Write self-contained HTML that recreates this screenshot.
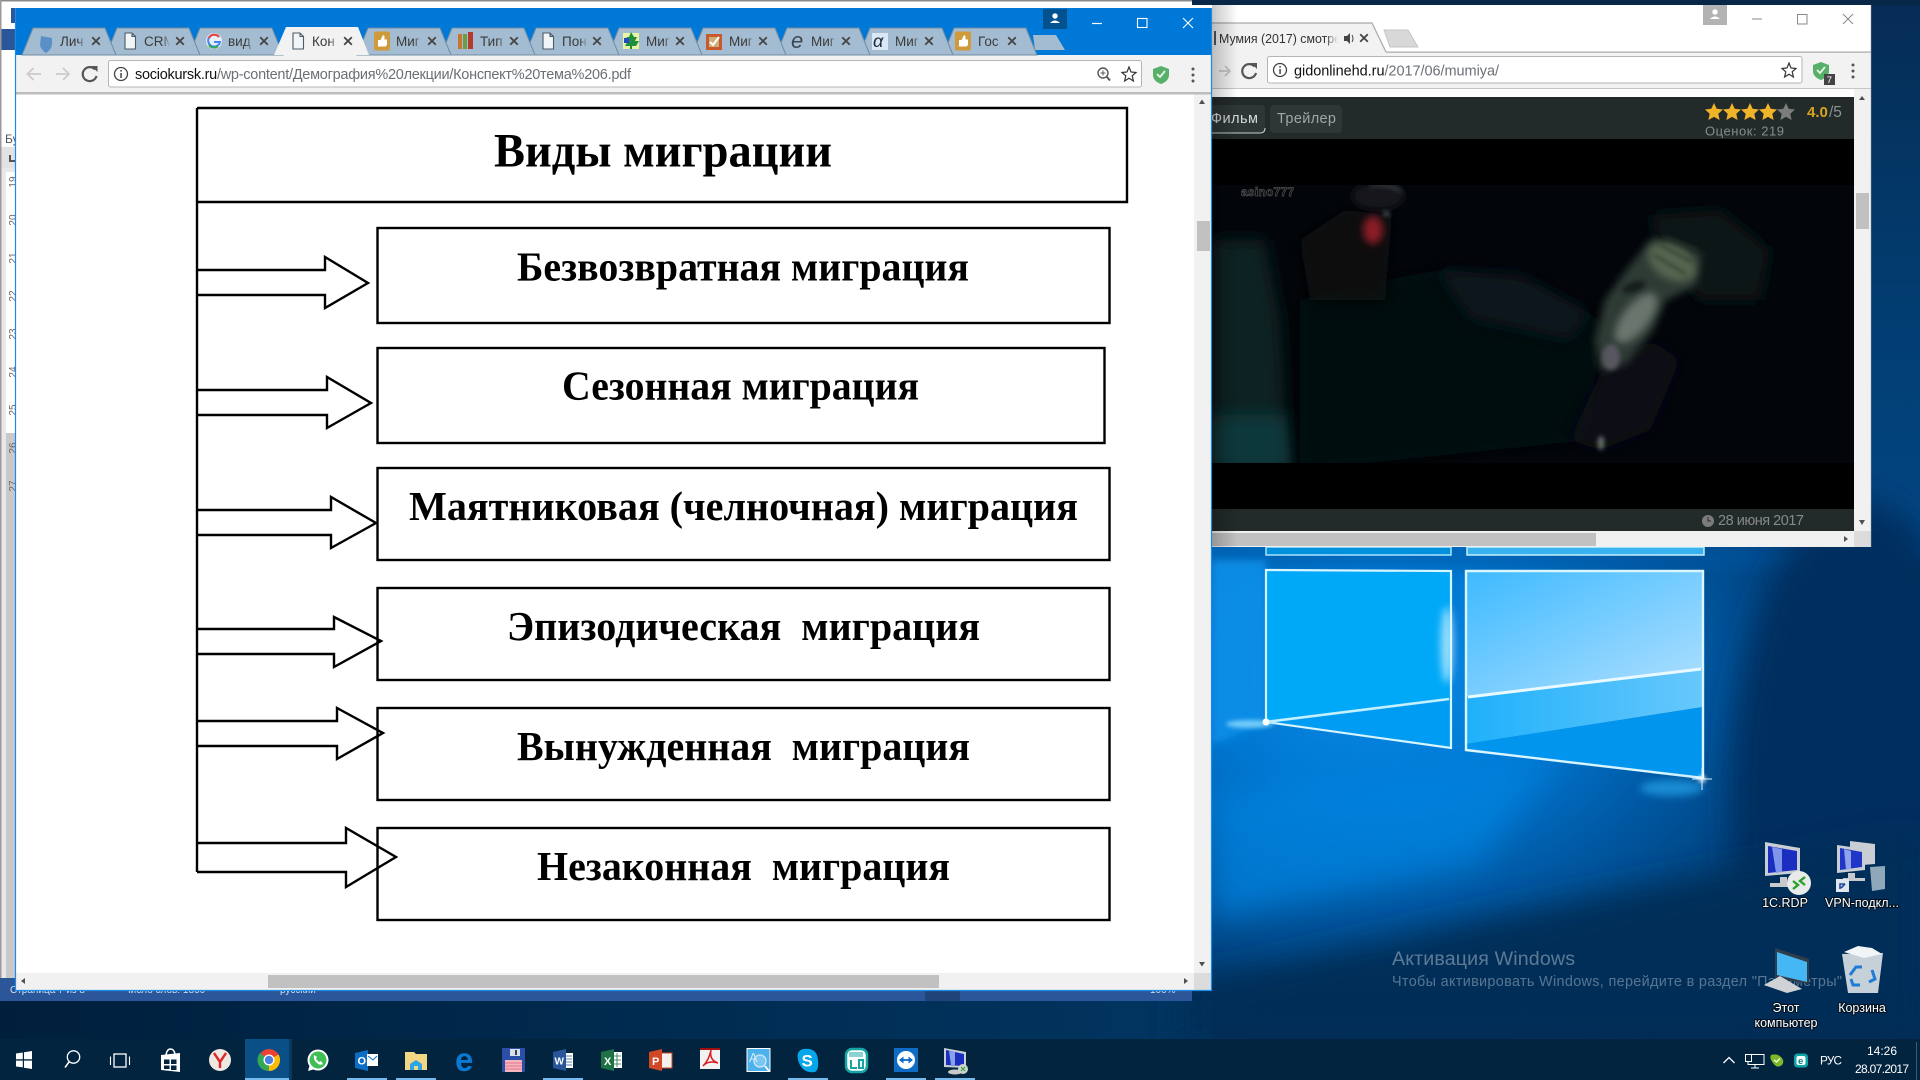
<!DOCTYPE html>
<html lang="ru"><head><meta charset="utf-8"><title>Виды миграции</title>
<style>
html,body{margin:0;padding:0;width:1920px;height:1080px;overflow:hidden;background:#012c57}
svg{display:block;position:absolute;left:0;top:0}
text{font-family:"Liberation Sans",sans-serif}
.pdf{font-family:"Liberation Serif",serif;font-weight:bold;fill:#000}
.tt{font-size:13.5px;fill:#3a3a3a}
.dl{font-size:12.5px;fill:#fff;stroke:rgba(0,0,0,.65);stroke-width:2px;paint-order:stroke;text-anchor:middle}
.rn{font-size:10px;fill:#666;text-anchor:middle}
</style></head><body>
<svg width="1920" height="1080" viewBox="0 0 1920 1080" xmlns="http://www.w3.org/2000/svg">
<defs>
<radialGradient id="glow" gradientUnits="userSpaceOnUse" cx="1380" cy="680" r="560" gradientTransform="translate(1380 680) scale(1 .72) translate(-1380 -680)">
<stop offset="0" stop-color="#0a8ae6"/><stop offset=".3" stop-color="#0078d2"/><stop offset=".55" stop-color="#0059a4"/><stop offset=".8" stop-color="#003f78"/><stop offset="1" stop-color="#012c57"/></radialGradient>
<linearGradient id="paneR" x1="0" y1="0" x2="1" y2="1"><stop offset="0" stop-color="#3dbaff"/><stop offset="1" stop-color="#b2e0ff"/></linearGradient>
<linearGradient id="paneR2" x1="0" y1="0" x2="1" y2="0"><stop offset="0" stop-color="#1fb0fb"/><stop offset="1" stop-color="#67c8fb"/></linearGradient>
<linearGradient id="shL" x1="0" y1="0" x2="1" y2="0"><stop offset="0" stop-color="#000" stop-opacity=".22"/><stop offset="1" stop-color="#000" stop-opacity="0"/></linearGradient>
<linearGradient id="rightS" x1="0" y1="0" x2="0" y2="1"><stop offset="0" stop-color="#062c55"/><stop offset=".5" stop-color="#023c6f"/><stop offset="1" stop-color="#024684"/></linearGradient>
<linearGradient id="bandL" x1="0" y1="0" x2="1" y2="0"><stop offset="0" stop-color="#001f3c"/><stop offset="1" stop-color="#013764"/></linearGradient>
<linearGradient id="bandV" x1="0" y1="0" x2="0" y2="1"><stop offset="0" stop-color="#012c55" stop-opacity="0"/><stop offset="1" stop-color="#012c55" stop-opacity=".8"/></linearGradient>
<linearGradient id="fadeB" x1="0" y1="0" x2="1" y2="0"><stop offset="0" stop-color="#a4bcd1" stop-opacity="0"/><stop offset="1" stop-color="#a4bcd1"/></linearGradient>
<linearGradient id="fadeA" x1="0" y1="0" x2="1" y2="0"><stop offset="0" stop-color="#f2f2f2" stop-opacity="0"/><stop offset="1" stop-color="#f2f2f2"/></linearGradient>
<filter id="b2" x="-60%" y="-60%" width="220%" height="220%"><feGaussianBlur stdDeviation="2"/></filter>
<filter id="b4" x="-60%" y="-60%" width="220%" height="220%"><feGaussianBlur stdDeviation="4"/></filter>
<filter id="b8" x="-60%" y="-60%" width="220%" height="220%"><feGaussianBlur stdDeviation="8"/></filter>
<filter id="b14" x="-30%" y="-60%" width="160%" height="220%"><feGaussianBlur stdDeviation="16"/></filter>
<g id="x"><path d="M-3.8-3.8L3.8 3.8M3.8-3.8L-3.8 3.8" stroke="#444" stroke-width="1.8" fill="none"/></g>
<g id="doc"><path d="M-5-8H2L5.5-4.5V8H-5Z M2-8V-4.5H5.5" fill="#f2f5f7" stroke="#4a5a66" stroke-width="1.1"/></g>
<g id="thumb"><rect x="-8" y="-9.5" width="16" height="19" rx="2" fill="#cf9a3c"/><path d="M-4-1H-1.5L1-6 2.5-5V-1.5H5V4L3.5 5.5H-4Z" fill="#fff"/></g>
<g id="fb"><rect x="18" y="32" width="8" height="18" fill="url(#fadeB)"/><rect x="26" y="32" width="6" height="18" fill="#a4bcd1"/></g>
</defs>

<!-- desktop wallpaper -->
<rect width="1920" height="1080" fill="#012c57"/>
<rect x="0" y="1000" width="1300" height="40" fill="url(#bandL)"/>
<rect x="1212" y="540" width="708" height="500" fill="url(#glow)"/>
<rect x="1871" y="0" width="49" height="560" fill="url(#rightS)"/>
<rect x="1192" y="0" width="728" height="5" fill="#082647"/>
<rect x="1212" y="548" width="708" height="20" fill="#0059a5" opacity=".55" filter="url(#b8)"/>
<ellipse cx="1860" cy="800" rx="130" ry="300" fill="#012f5e" filter="url(#b14)"/>
<path d="M1180 985L1500 915L1920 835V1045H1180Z" fill="#012e58" filter="url(#b14)"/>
<path d="M1212 790L1560 750 1480 860 1212 920Z" fill="#0082de" filter="url(#b14)" opacity=".75"/>
<rect x="1212" y="960" width="708" height="80" fill="url(#bandV)"/>
<path d="M1212 560H1266V722L1212 745Z" fill="#0a8fe8" filter="url(#b4)" opacity=".9"/>
<!-- panes top sliver -->
<path d="M1266 547H1451V555H1266Z" fill="#0090dc" stroke="#a9e2fb" stroke-width="1.5"/>
<path d="M1467 547H1704V555H1467Z" fill="#39b3f0" stroke="#c6eefc" stroke-width="1.5"/>
<!-- left pane -->
<path d="M1266 570L1451 571V748L1266 722Z" fill="#00a9f8"/>
<path d="M1266 722L1449 699V748Z" fill="#009bf2"/>
<ellipse cx="1447" cy="645" rx="6" ry="38" fill="#e0f7ff" filter="url(#b4)" opacity=".7"/>
<path d="M1266 570L1451 571V748L1266 722Z" fill="none" stroke="#d6f5ff" stroke-width="2.2"/>
<path d="M1266 722L1449 699" stroke="#c4f0ff" stroke-width="2.6"/>
<!-- right pane -->
<path d="M1466 571H1703V669L1466 697Z" fill="url(#paneR)"/>
<path d="M1466 697L1703 669V707L1466 744Z" fill="url(#paneR2)"/>
<path d="M1466 744L1703 707V778L1466 750Z" fill="#0295ee"/>
<path d="M1466 571H1703V778L1466 750Z" fill="none" stroke="#d9f6ff" stroke-width="2.4"/>
<path d="M1468 697L1701 669" stroke="#e8faff" stroke-width="3"/>
<ellipse cx="1250" cy="724" rx="24" ry="4" fill="#8edcff" filter="url(#b2)" opacity=".8"/>
<circle cx="1266" cy="722" r="3.5" fill="#fff"/>
<ellipse cx="1672" cy="788" rx="32" ry="8" fill="#2cb0f8" filter="url(#b4)" opacity=".6"/>
<circle cx="1702" cy="779" r="3.5" fill="#fff" filter="url(#b2)"/>
<path d="M1702 768V790M1692 779H1712" stroke="#d8f4ff" stroke-width="1"/>

<!-- activation -->
<text x="1392" y="965" font-size="19.6" fill="#fff" fill-opacity=".36" textLength="183">Активация Windows</text>
<text x="1392" y="986" font-size="14.4" fill="#fff" fill-opacity=".34" textLength="450">Чтобы активировать Windows, перейдите в раздел "Параметры"</text>

<!-- desktop icons -->
<g>
<path d="M1765 842L1800 848V873L1765 876Z" fill="#c9ced4"/><path d="M1768 846L1797 851V870L1768 873Z" fill="#1a2fc0"/><path d="M1772 847L1782 849V872L1776 873Z" fill="#7f95ea"/>
<path d="M1780 877H1787V883H1798V887H1770V883H1780Z" fill="#c7c9cc"/>
<circle cx="1799" cy="883" r="12" fill="#e9ebe9"/><path d="M1793 881L1798 885 1793 889M1805 877L1800 881 1805 885" stroke="#2aa02a" stroke-width="2.4" fill="none"/>
<text x="1785" y="907" class="dl">1С.RDP</text>
<path d="M1850 841L1875 844V864L1850 866Z" fill="#c9ced4"/><path d="M1837 845L1865 849V870L1837 873Z" fill="#c9ced4"/><path d="M1840 848L1862 852V867L1840 870Z" fill="#2036c6"/><path d="M1844 849L1851 851V869L1846 870Z" fill="#8fa3ea"/>
<path d="M1848 873H1855V878H1865V881H1843V878H1848Z" fill="#c7c9cc"/><path d="M1870 867L1885 866V889L1872 891Z" fill="#8ea7bb"/>
<rect x="1836" y="879" width="13" height="13" fill="#dfe6ee"/><path d="M1840 889V884H1845M1845 884L1841 888" stroke="#1c4a9c" stroke-width="1.6" fill="none"/>
<text x="1862" y="907" class="dl">VPN-подкл...</text>
<path d="M1775 948L1809 959V984L1775 978Z" fill="#2f3e4a"/><path d="M1777 952L1807 962V982L1777 975Z" fill="#44b7f4"/>
<path d="M1764 985L1780 976 1802 989 1787 993Z" fill="#cfd3d6"/>
<text x="1786" y="1012" class="dl">Этот</text><text x="1786" y="1027" class="dl">компьютер</text>
<path d="M1842 954L1883 953 1878 993 1848 993Z" fill="#c6d0d9"/><path d="M1844 952L1858 946 1872 948 1882 954 1864 958Z" fill="#f2f5f7"/>
<path d="M1850 975L1856 967H1862M1872 970L1875 979 1869 982M1860 985H1853L1851 979" stroke="#1d7cd6" stroke-width="3" fill="none"/>
<text x="1862" y="1012" class="dl">Корзина</text>
</g>

<!-- Word window behind -->
<rect x="0" y="0" width="1192" height="1001" fill="#fff"/>
<rect x="0" y="0" width="1192" height="1.5" fill="#8a8a8a"/>
<rect x="0" y="0" width="1.5" height="1001" fill="#9a9a9a"/>
<rect x="11" y="8" width="5" height="15" fill="#2b579a"/>
<rect x="1.5" y="29" width="14" height="21" fill="#2b579a"/>
<rect x="1.5" y="147" width="14" height="21" fill="#e2e2e2"/>
<path d="M10 155V161H15" stroke="#555" stroke-width="2" fill="none"/>
<text x="5" y="143" font-size="12" fill="#555">Бу</text>
<rect x="1.5" y="168" width="14" height="810" fill="#e8e8e8"/>
<rect x="6" y="172" width="9.5" height="261" fill="#fff"/>
<rect x="6" y="433" width="9.5" height="545" fill="#c9c9c9"/>
<g class="rn">
<text transform="translate(16 182) rotate(-90)" class="rn">19</text><text transform="translate(16 220) rotate(-90)" class="rn">20</text><text transform="translate(16 258) rotate(-90)" class="rn">21</text><text transform="translate(16 296) rotate(-90)" class="rn">22</text><text transform="translate(16 334) rotate(-90)" class="rn">23</text><text transform="translate(16 372) rotate(-90)" class="rn">24</text><text transform="translate(16 410) rotate(-90)" class="rn">25</text><text transform="translate(16 448) rotate(-90)" class="rn">26</text><text transform="translate(16 486) rotate(-90)" class="rn">27</text>
</g>
<rect x="0" y="978" width="1192" height="23" fill="#2b579a"/>
<rect x="925" y="990" width="35" height="11" fill="#1e4479"/>
<text x="10" y="993" font-size="10" fill="#d6e2f2">Страница 7 из 8</text>
<text x="124" y="993" font-size="10" fill="#d6e2f2">Число слов: 1860</text>
<text x="280" y="993" font-size="10" fill="#d6e2f2">русский</text>
<text x="1150" y="993" font-size="10" fill="#d6e2f2">100%</text>

<!-- second Chrome window -->
<rect x="1192" y="5" width="679" height="542" fill="#fff"/>
<rect x="1192" y="52" width="679" height="36" fill="#f2f2f2"/>
<rect x="1192" y="51.5" width="180" height="1" fill="#f2f2f2"/>
<rect x="1386" y="51.5" width="485" height="1.2" fill="#a9a9a9"/>
<path d="M1192 23H1372L1386 52H1192Z" fill="#f2f2f2"/>
<path d="M1212 23H1372L1386 52" fill="none" stroke="#a9a9a9" stroke-width="1.2"/>
<text x="1219" y="43" font-size="13" fill="#333" textLength="122" lengthAdjust="spacingAndGlyphs">Мумия (2017) смотре</text>
<rect x="1326" y="30" width="12" height="18" fill="url(#fadeA)"/><rect x="1338" y="30" width="4" height="18" fill="#f2f2f2"/>
<path d="M1344 36H1347L1350 33V44L1347 41H1344Z" fill="#444"/><path d="M1352 35Q1354 38.500 1352 42" stroke="#444" fill="none"/>
<use href="#x" x="1364" y="38"/>
<rect x="1214" y="31" width="2" height="14" fill="#555"/>
<path d="M1384 30H1408L1418 47H1390Z" fill="#d8d8d8" stroke="#c5c5c5"/>
<rect x="1703" y="5" width="24" height="20" fill="#b3b3b3"/>
<circle cx="1715" cy="12" r="2.700" fill="#fff"/><path d="M1710 19Q1715 14 1720 19Z" fill="#fff"/>
<path d="M1752 19H1762" stroke="#8a8a8a" stroke-width="1"/>
<rect x="1797.500" y="14.500" width="9.500" height="9.500" fill="none" stroke="#8a8a8a"/>
<path d="M1843 14L1853 24M1853 14L1843 24" stroke="#8a8a8a" fill="none"/>
<!-- toolbar -->
<path d="M1219 71H1229M1225 66L1230 71 1225 76" stroke="#c4c4c4" stroke-width="1.8" fill="none"/>
<path d="M1254.500 66.500A7 7 0 1 0 1256 73" stroke="#555" stroke-width="2.200" fill="none"/><path d="M1251 63L1257 63 1257 69Z" fill="#555"/>
<rect x="1267.500" y="56.500" width="534.500" height="26.500" rx="2" fill="#fff" stroke="#b5b5b5"/>
<circle cx="1280" cy="70" r="6.500" fill="none" stroke="#444" stroke-width="1.300"/><rect x="1279.300" y="69" width="1.500" height="5" fill="#444"/><rect x="1279.300" y="66" width="1.500" height="1.600" fill="#444"/>
<text x="1294" y="75.500" font-size="14.500" fill="#6b7076" textLength="205"><tspan fill="#111">gidonlinehd.ru</tspan>/2017/06/mumiya/</text>
<path d="M1789 63L1791 68 1796 68.500 1792.200 71.800 1793.400 77 1789 74.200 1784.600 77 1785.800 71.800 1782 68.500 1787 68Z" fill="#fff" stroke="#333" stroke-width="1.200"/>
<path d="M1821 62L1829 65V71Q1829 77 1821 80 1813 77 1813 71V65Z" fill="#57b06a"/><path d="M1817 70L1820 73 1825 67" stroke="#e8f5e8" stroke-width="1.800" fill="none"/>
<rect x="1824" y="74" width="11" height="11" fill="#444"/><text x="1826.700" y="83" font-size="9.500" fill="#fff">7</text>
<circle cx="1853" cy="65" r="1.500" fill="#555"/><circle cx="1853" cy="71" r="1.500" fill="#555"/><circle cx="1853" cy="77" r="1.500" fill="#555"/>
<rect x="1192" y="88" width="679" height="1" fill="#c5c5c5"/>
<!-- page content -->
<rect x="1212" y="97" width="642" height="434" fill="#000"/>
<!-- video -->
<rect x="1212" y="185" width="642" height="278" fill="#02060a"/>
<g>
<path d="M1212 240H1265L1280 320L1288 470H1212Z" fill="#072124" filter="url(#b8)"/>
<path d="M1212 415H1286L1292 470H1212Z" fill="#0e383b" filter="url(#b8)"/>
<path d="M1300 300L1385 280 1450 268 1540 285 1600 320 1590 440 1300 470Z" fill="#04090e" filter="url(#b8)"/>
<path d="M1436 270L1520 275 1590 312 1570 340 1470 318Z" fill="#08151b" filter="url(#b8)"/>
<path d="M1300 240L1345 210 1392 215 1385 300 1310 300Z" fill="#090b0e" filter="url(#b8)"/>
<ellipse cx="1378" cy="196" rx="26" ry="14" fill="#15181a" filter="url(#b4)"/>
<path d="M1368 188Q1385 183 1404 194 L1400 188Q1385 180 1370 186Z" fill="#4c5a5a" filter="url(#b2)" opacity=".6"/>
<ellipse cx="1373" cy="230" rx="10" ry="14" fill="#8a1c28" filter="url(#b4)"/>
<path d="M1382 212L1388 211 1391 215 1385 216Z" fill="#7a8e8e" filter="url(#b2)" opacity=".6"/>
<!-- head -->
<path d="M1650 215L1720 210 1770 250 1760 300 1700 300 1660 250Z" fill="#0c1616" filter="url(#b8)"/>
<path d="M1570 440L1600 375 1650 340 1680 360 1650 430 1600 450Z" fill="#0e1112" filter="url(#b8)"/>
<path d="M1652 238L1702 254 1696 286 1666 300 1652 332 1626 364 1600 372 1595 340 1605 300 1628 268Z" fill="#2e3a34" filter="url(#b4)"/>
<ellipse cx="1672" cy="262" rx="26" ry="17" transform="rotate(30 1672 262)" fill="#55664f" filter="url(#b4)"/>
<path d="M1660 245L1692 262M1654 255L1686 274M1664 236L1698 250" stroke="#2a352c" stroke-width="2" filter="url(#b2)" fill="none"/>
<ellipse cx="1636" cy="318" rx="30" ry="13" transform="rotate(-52 1636 318)" fill="#6a756d" filter="url(#b4)"/>
<ellipse cx="1634" cy="287" rx="12" ry="5" transform="rotate(-20 1634 287)" fill="#141a1a" filter="url(#b2)"/>
<ellipse cx="1611" cy="357" rx="9" ry="13" fill="#56565f" filter="url(#b2)"/>
<ellipse cx="1601" cy="443" rx="3.500" ry="7" fill="#5f6a64" filter="url(#b2)"/>
<text x="1241" y="196" font-size="12" font-weight="bold" fill="#000" stroke="#555" stroke-width=".7" textLength="53">asino777</text>
</g>
<rect x="1212" y="463" width="642" height="46" fill="#000"/>
<rect x="1212" y="139" width="642" height="46" fill="#000"/>
<rect x="1212" y="97" width="642" height="42" fill="#232a2a"/>
<rect x="1190" y="105" width="75" height="28" rx="4" fill="#2f3636"/><path d="M1212 133H1260Q1265 133 1265 128" stroke="#c9cfcf" fill="none"/>
<text x="1211" y="123" font-size="14.500" fill="#d5d9d9" textLength="47">Фильм</text>
<rect x="1270" y="105" width="72" height="28" rx="4" fill="#2f3636"/>
<text x="1277" y="123" font-size="14.500" fill="#9ea6a6" textLength="59">Трейлер</text>
<g fill="#f0b429">
<path id="s" d="M1714 103L1716.700 108.800 1723 109.500 1718.300 113.800 1719.600 120 1714 116.900 1708.400 120 1709.700 113.800 1705 109.500 1711.300 108.800Z"/>
<use href="#s" x="18"/><use href="#s" x="36"/><use href="#s" x="54"/>
</g>
<path d="M1786 103L1788.700 108.800 1795 109.500 1790.300 113.800 1791.600 120 1786 116.900 1780.400 120 1781.700 113.800 1777 109.500 1783.300 108.800Z" fill="#7c7c7c"/>
<text x="1807" y="117" font-size="15" font-weight="bold" fill="#d9a520">4.0</text><text x="1829" y="117" font-size="15.500" fill="#8b9292">/5</text>
<text x="1705" y="135.500" font-size="13" fill="#848c8c" textLength="79">Оценок: 219</text>
<rect x="1212" y="509" width="642" height="22" fill="#232a2a"/>
<circle cx="1708" cy="521" r="6" fill="#7c7c7c"/><path d="M1708 517V521H1711" stroke="#2a2a2a" stroke-width="1" fill="none"/>
<text x="1718" y="525" font-size="14.500" fill="#888" textLength="86">28 июня 2017</text>
<!-- scrollbars -->
<rect x="1854" y="89" width="17" height="458" fill="#f1f1f1"/>
<rect x="1856" y="193" width="13" height="36" fill="#c1c1c1"/>
<path d="M1859 100H1865L1862 96Z" fill="#505050"/><path d="M1859 520H1865L1862 525Z" fill="#505050"/>
<rect x="1212" y="531" width="642" height="16" fill="#f1f1f1"/>
<rect x="1212" y="533" width="384" height="13" fill="#c1c1c1"/>
<path d="M1844 536V542L1848 539Z" fill="#505050"/>
<rect x="1854" y="531" width="17" height="16" fill="#dcdcdc"/>
<rect x="1212" y="5" width="26" height="542" fill="url(#shL)"/>
<rect x="1870.500" y="5" width="1" height="542" fill="#9aa0a6" opacity=".5"/>

<!-- main Chrome window -->
<rect x="15" y="8" width="1197" height="983" fill="#0078d7"/>
<rect x="16" y="55" width="1195" height="935" fill="#f2f2f2"/>
<rect x="16" y="92" width="1195" height="2.500" fill="#bdbdbd"/>
<rect x="16" y="94.500" width="1178" height="879" fill="#fff"/>
<g id="tabs">
<path d="M1035 50L1033 35H1056L1065 50Z" fill="#a4bcd1"/>
<path d="M943 55L954 28H1026L1037 55Z" fill="#a4bcd1" stroke="#6e8ca5"/>
<path d="M859 55L870 28H942L953 55Z" fill="#a4bcd1" stroke="#6e8ca5"/>
<path d="M776 55L787 28H859L870 55Z" fill="#a4bcd1" stroke="#6e8ca5"/>
<path d="M692 55L703 28H775L786 55Z" fill="#a4bcd1" stroke="#6e8ca5"/>
<path d="M608 55L619 28H691L702 55Z" fill="#a4bcd1" stroke="#6e8ca5"/>
<path d="M525 55L536 28H608L619 55Z" fill="#a4bcd1" stroke="#6e8ca5"/>
<path d="M441 55L452 28H524L535 55Z" fill="#a4bcd1" stroke="#6e8ca5"/>
<path d="M357 55L368 28H440L451 55Z" fill="#a4bcd1" stroke="#6e8ca5"/>
<path d="M189 55L200 28H272L283 55Z" fill="#a4bcd1" stroke="#6e8ca5"/>
<path d="M106 55L117 28H189L200 55Z" fill="#a4bcd1" stroke="#6e8ca5"/>
<path d="M22 55L33 28H105L116 55Z" fill="#a4bcd1" stroke="#6e8ca5"/>
<path d="M274 55L286 27H358L369 55Z" fill="#f2f2f2"/>
</g>
<!-- tab content -->
<path d="M41 36L52 38V45Q51 50 46 53 41 50 40 45Z" fill="#5a8fc7"/>
<text x="60" y="46" class="tt">Лич</text><use href="#fb" x="60"/><use href="#x" x="96" y="41"/>
<use href="#doc" x="130" y="41"/><text x="144" y="46" class="tt">CRM</text><use href="#fb" x="144"/><use href="#x" x="180" y="41"/>
<circle cx="214" cy="41" r="8" fill="#e8eef3"/><path d="M219 37A6 6 0 1 0 220 42H214" fill="none" stroke="#4285f4" stroke-width="2"/><path d="M219 37A6 6 0 0 0 209 38" fill="none" stroke="#ea4335" stroke-width="2"/><path d="M209 45A6 6 0 0 0 218 46" fill="none" stroke="#34a853" stroke-width="2"/>
<text x="228" y="46" class="tt">вид</text><use href="#fb" x="228"/><use href="#x" x="264" y="41"/>
<use href="#doc" x="298" y="41"/><text x="312" y="46" class="tt" fill="#222">Кон</text><rect x="330" y="32" width="8" height="18" fill="url(#fadeA)"/><rect x="338" y="32" width="6" height="18" fill="#f2f2f2"/><use href="#x" x="348" y="41"/>
<use href="#thumb" x="382" y="41"/><text x="396" y="46" class="tt">Миг</text><use href="#fb" x="396"/><use href="#x" x="432" y="41"/>
<rect x="458" y="34" width="4" height="15" fill="#c7762f"/><rect x="463" y="34" width="4" height="15" fill="#6e9e44"/><rect x="468" y="32" width="5" height="17" fill="#b33a2c"/>
<text x="480" y="46" class="tt">Тип</text><use href="#fb" x="480"/><use href="#x" x="514" y="41"/>
<use href="#doc" x="548" y="41"/><text x="562" y="46" class="tt">Пон</text><use href="#fb" x="562"/><use href="#x" x="597" y="41"/>
<rect x="623" y="33" width="16" height="16" fill="#e8f4a0"/><path d="M631 32L634 37H637L635 41H639L636 46H632V49H630V46H625L628 41H624L627 37H629Z" fill="#1f8f3e"/><rect x="624" y="38" width="5" height="5" fill="#2448c0"/>
<text x="646" y="46" class="tt">Миг</text><use href="#fb" x="646"/><use href="#x" x="680" y="41"/>
<rect x="706" y="34" width="16" height="16" fill="#c85a2c"/><rect x="709" y="37" width="10" height="10" fill="#cbb07a"/><path d="M710 42L713 45 719 37" stroke="#fff" stroke-width="2" fill="none"/>
<text x="729" y="46" class="tt">Миг</text><use href="#fb" x="729"/><use href="#x" x="763" y="41"/>
<text x="791" y="48" font-size="22" font-family="Liberation Serif" font-style="italic" fill="#3a4a55">e</text>
<text x="811" y="46" class="tt">Миг</text><use href="#fb" x="811"/><use href="#x" x="846" y="41"/>
<rect x="872" y="33" width="16" height="17" fill="#d8e8f4"/><text x="873" y="47" font-size="18" font-family="Liberation Serif" font-style="italic" fill="#1a2a3a">α</text>
<text x="895" y="46" class="tt">Миг</text><use href="#fb" x="895"/><use href="#x" x="929" y="41"/>
<use href="#thumb" x="963" y="41"/><text x="978" y="46" class="tt">Гос</text><use href="#fb" x="978"/><use href="#x" x="1012" y="41"/>
<!-- window controls -->
<rect x="1043" y="9" width="24" height="20" fill="#02528f"/>
<circle cx="1055" cy="16" r="2.700" fill="#fff"/><path d="M1050 23Q1055 18 1060 23Z" fill="#fff"/>
<path d="M1092 23.500H1102" stroke="#fff" stroke-width="1.200"/>
<rect x="1137.500" y="18.500" width="9.500" height="9" fill="none" stroke="#fff" stroke-width="1.100"/>
<path d="M1183 18L1193 28M1193 18L1183 28" stroke="#fff" stroke-width="1.100" fill="none"/>
<!-- toolbar -->
<path d="M28 74H41M33.500 68L27.500 74 33.500 80" stroke="#cbcbcb" stroke-width="1.800" fill="none"/>
<path d="M56 74H69M63 68L69 74 63 80" stroke="#cbcbcb" stroke-width="1.800" fill="none"/>
<path d="M95 69.500A7 7 0 1 0 96.500 76" stroke="#555" stroke-width="2.200" fill="none"/><path d="M91.500 66L97.500 66 97.500 72Z" fill="#555"/>
<rect x="108.500" y="60.500" width="1033" height="26.500" rx="2" fill="#fff" stroke="#b5b5b5"/>
<circle cx="121" cy="74" r="6.500" fill="none" stroke="#444" stroke-width="1.300"/><rect x="120.300" y="73" width="1.500" height="5" fill="#444"/><rect x="120.300" y="70" width="1.500" height="1.600" fill="#444"/>
<text x="135" y="79" font-size="14.500" fill="#6b7076" textLength="496"><tspan fill="#111">sociokursk.ru</tspan>/wp-content/Демография%20лекции/Конспект%20тема%206.pdf</text>
<circle cx="1103" cy="73" r="5" fill="none" stroke="#555" stroke-width="1.400"/><path d="M1107 77L1110 80.500" stroke="#555" stroke-width="2"/><path d="M1100.500 73H1105.500M1103 70.500V75.500" stroke="#555"/>
<path d="M1129 67L1131 72 1136 72.500 1132.200 75.800 1133.400 81 1129 78.200 1124.600 81 1125.800 75.800 1122 72.500 1127 72Z" fill="#fff" stroke="#333" stroke-width="1.200"/>
<path d="M1161 66L1169 69V75Q1169 81 1161 84 1153 81 1153 75V69Z" fill="#57b06a"/><path d="M1157 74L1160 77 1165 71" stroke="#e8f5e8" stroke-width="1.800" fill="none"/>
<circle cx="1193" cy="69" r="1.500" fill="#555"/><circle cx="1193" cy="75" r="1.500" fill="#555"/><circle cx="1193" cy="81" r="1.500" fill="#555"/>

<!-- PDF diagram -->
<g fill="none" stroke="#000" stroke-width="2.400">
<path d="M197 108H1127V202H197"/><path d="M197 108V872"/>
<rect x="377.500" y="228" width="732" height="95"/>
<rect x="377.500" y="348" width="727" height="95"/>
<rect x="377.500" y="468" width="732" height="92"/>
<rect x="377.500" y="588" width="732" height="92"/>
<rect x="377.500" y="708" width="732" height="92"/>
<rect x="377.500" y="828" width="732" height="92"/>
<path d="M197 270H325V257L368 283 325 308V295H197"/>
<path d="M197 390H327V377L371 403 327 428V415H197"/>
<path d="M197 510H331V497L376 523 331 548V535H197"/>
<path d="M197 629H334V617L381 641 334 667V654H197"/>
<path d="M197 721H337V708L383 733 337 759V746H197"/>
<path d="M197 843H346V828L396 857 346 887V872H197"/>
</g>
<text class="pdf" x="494" y="166.500" font-size="48" textLength="338" lengthAdjust="spacingAndGlyphs">Виды миграции</text>
<text class="pdf" x="517" y="280.500" font-size="41" textLength="452" lengthAdjust="spacingAndGlyphs">Безвозвратная миграция</text>
<text class="pdf" x="562" y="399.500" font-size="41" textLength="357" lengthAdjust="spacingAndGlyphs">Сезонная миграция</text>
<text class="pdf" x="409" y="520" font-size="41" textLength="669" lengthAdjust="spacingAndGlyphs">Маятниковая (челночная) миграция</text>
<text class="pdf" x="507" y="640" font-size="41" textLength="473" lengthAdjust="spacingAndGlyphs" xml:space="preserve">Эпизодическая  миграция</text>
<text class="pdf" x="517" y="760" font-size="41" textLength="453" lengthAdjust="spacingAndGlyphs" xml:space="preserve">Вынужденная  миграция</text>
<text class="pdf" x="537" y="880" font-size="41" textLength="413" lengthAdjust="spacingAndGlyphs" xml:space="preserve">Незаконная  миграция</text>

<!-- main scrollbars -->
<rect x="1194" y="94.500" width="17" height="879" fill="#f1f1f1"/>
<rect x="1197" y="221" width="13" height="30" fill="#c1c1c1"/>
<path d="M1199 104H1205L1202 99.500Z" fill="#505050"/><path d="M1199 962H1205L1202 966.500Z" fill="#505050"/>
<rect x="16" y="973" width="1178" height="17" fill="#f1f1f1"/>
<rect x="268" y="975" width="671" height="13" fill="#c1c1c1"/>
<path d="M25 978V984L21 981Z" fill="#505050"/><path d="M1184 978V984L1188 981Z" fill="#505050"/>
<rect x="1194" y="973" width="17" height="17" fill="#dcdcdc"/>
<path d="M15.500 8V990.500H1211.500V8" fill="none" stroke="#1b8be4" stroke-width="1.200"/>

<!-- taskbar -->
<rect x="0" y="1039" width="1920" height="41" fill="#02243f"/>
<rect x="245" y="1039" width="44" height="41" fill="#0a4f85"/>
<g fill="#76b9ed">
<rect x="245" y="1078" width="44" height="2"/><rect x="347" y="1078" width="40" height="2"/><rect x="396" y="1078" width="40" height="2"/><rect x="543" y="1078" width="40" height="2"/><rect x="788" y="1078" width="40" height="2"/><rect x="886" y="1078" width="40" height="2"/><rect x="935" y="1078" width="40" height="2"/>
</g>
<rect x="289" y="1039" width="3" height="41" fill="#0b3a60"/>
<path d="M16 1053.500L22.800 1052.500V1059.300H16ZM24 1052.300L32 1051V1059.300H24ZM16 1060.600H22.800V1067.400L16 1066.500ZM24 1060.600H32V1069L24 1067.700Z" fill="#fff"/>
<circle cx="73.500" cy="1057" r="6.200" fill="none" stroke="#fff" stroke-width="1.300"/><path d="M69 1062L65 1067.500" stroke="#fff" stroke-width="1.500"/>
<rect x="114" y="1054" width="12" height="13" fill="none" stroke="#fff" stroke-width="1.300"/><path d="M110.500 1056.500V1065M129.500 1056.500V1065" stroke="#fff" stroke-width="1.100"/>
<path d="M161 1055L180 1053V1072L161 1070Z" fill="#fff"/><path d="M166 1055Q167 1049 170.500 1049 174 1049 175 1054" fill="none" stroke="#fff" stroke-width="1.500"/><path d="M164 1059.500H169.500V1064H164ZM171 1059.500H176.500V1064H171ZM164 1065.500H169.500V1069H164ZM171 1065.500H176.500V1070H171Z" fill="#02243f"/>
<circle cx="220" cy="1060" r="11" fill="#eee7e2"/><path d="M214 1053L220 1062V1068M226 1053L220 1062" stroke="#e02222" stroke-width="2.400" fill="none"/>
<circle cx="269" cy="1060" r="11" fill="#ea4335"/><path d="M269 1060L260 1053A11 11 0 0 0 269 1071Z" fill="#34a853"/><path d="M269 1060V1071A11 11 0 0 0 278.500 1054.500Z" fill="#fbbc05"/><circle cx="269" cy="1060" r="5.500" fill="#fff"/><circle cx="269" cy="1060" r="4.200" fill="#4c80e0"/>
<circle cx="318" cy="1060" r="10.500" fill="#fff"/><circle cx="318" cy="1060" r="8.500" fill="#3fbe55"/><path d="M308 1071L310 1064 315 1069Z" fill="#fff"/><path d="M314 1055Q313 1060 317 1063 320 1066 323 1064L321 1061 319 1062 316 1059 317 1057Z" fill="#fff"/>
<path d="M355 1053L368 1050V1071L355 1068Z" fill="#0a6fc4"/><rect x="367" y="1054" width="11" height="12" fill="#fff"/><path d="M368 1056L373 1060 377 1056" stroke="#0a6fc4" fill="none"/><text x="357.500" y="1064.500" font-size="11" font-weight="bold" fill="#fff">O</text>
<path d="M405 1052H414L416 1054H427V1070H405Z" fill="#f3d684"/><path d="M410 1070V1064L416 1060 422 1064V1070H418V1066H414V1070Z" fill="#2ca6e8"/>
<text x="455" y="1071" font-size="33" font-weight="bold" fill="#0b78d4" font-family="Liberation Sans">e</text>
<rect x="502" y="1048" width="23" height="24" rx="1" fill="#2b4fa8"/><rect x="505" y="1060" width="17" height="12" fill="#f3b6bf"/><rect x="510" y="1049" width="10" height="7" fill="#d9dfe8"/><rect x="515" y="1050" width="2" height="5" fill="#345"/><path d="M505 1063H522M505 1066H522M505 1069H522" stroke="#e55b6e" stroke-width=".8"/>
<rect x="562" y="1053" width="11" height="15" fill="#fff"/><path d="M553 1052L566 1049V1071L553 1068Z" fill="#2a5699"/><text x="554.500" y="1064.500" font-size="10" font-weight="bold" fill="#fff">W</text><path d="M566 1056H572M566 1059H572M566 1062H572M566 1065H572" stroke="#2a5699" stroke-width=".8"/>
<rect x="611" y="1052" width="11" height="16" fill="#fff"/><path d="M601 1052L614 1049V1071L601 1068Z" fill="#1f7244"/><text x="604" y="1065" font-size="11" font-weight="bold" fill="#fff">X</text><path d="M614 1056H621M614 1060H621M614 1064H621M617 1053V1067" stroke="#1f7244" stroke-width=".8"/>
<rect x="660" y="1053" width="12" height="15" fill="#f3f0ee" stroke="#d24726"/><path d="M649 1052L662 1049V1071L649 1068Z" fill="#d24726"/><text x="652" y="1065" font-size="11" font-weight="bold" fill="#fff">P</text>
<path d="M700 1049H720V1069L700 1069Z" fill="#f2f2f2"/><rect x="700" y="1048" width="20" height="2" fill="#a01010"/><path d="M703 1066Q709 1060 711 1050 709 1060 718 1063 708 1060 703 1066Z" fill="none" stroke="#d81e1e" stroke-width="1.500"/>
<rect x="747" y="1048.500" width="23" height="23" fill="#4db2ec" stroke="#fff"/><circle cx="760" cy="1061" r="6" fill="#79c6f2" stroke="#cfe9f8" stroke-width="1.300"/><path d="M765 1066L769 1071" stroke="#fff" stroke-width="1.800"/><text x="749" y="1062" font-size="13" fill="#cfe9f8">A</text>
<path d="M803 1049Q817 1047 818 1060 819 1070 815 1072 802 1074 798 1060 796 1051 803 1049Z" fill="#05a6ea"/><text x="801.500" y="1066.500" font-size="17" font-weight="bold" fill="#fff">S</text>
<rect x="846" y="1049" width="21" height="23" rx="6" fill="#fff" stroke="#14a5a5" stroke-width="2.500"/><rect x="849" y="1052" width="14" height="5" fill="#8bd3d3"/><path d="M851 1060V1068H857M859 1060H863V1068H859Z" stroke="#14a5a5" stroke-width="2" fill="none"/>
<rect x="894" y="1048" width="24" height="24" fill="#0e6cc4"/><circle cx="906" cy="1060" r="9" fill="#fff"/><path d="M900 1060H912" stroke="#0e6cc4" stroke-width="1.800"/><path d="M903.500 1056.500L899 1060 903.500 1063.500ZM908.500 1056.500L913 1060 908.500 1063.500Z" fill="#0e6cc4"/>
<path d="M944 1048L966 1052V1068L944 1067Z" fill="#c8d0d8"/><path d="M946 1050L964 1054V1066L946 1065Z" fill="#1a2fc0"/><path d="M949 1051L955 1052V1065L951 1065Z" fill="#8aa0e8"/><ellipse cx="955" cy="1072" rx="7" ry="2.500" fill="#c9c9c9"/><circle cx="963" cy="1069" r="5" fill="#cbd3cb"/><path d="M961 1067L963 1069 965 1071M965 1067L961 1071" stroke="#3a9c3a"/>
<!-- tray -->
<path d="M1723.500 1063L1729 1057.500 1734.500 1063" stroke="#fff" stroke-width="1.300" fill="none"/>
<rect x="1748" y="1054.500" width="16" height="10" fill="none" stroke="#fff"/><rect x="1745.500" y="1054.500" width="6" height="7" fill="#02243f" stroke="#fff"/><path d="M1755 1065V1068M1751 1068H1759" stroke="#fff"/>
<path d="M1771 1055Q1777 1053 1781 1057 1785 1061 1782 1065 1777 1069 1773 1063 1769 1058 1771 1055Z" fill="#7eb829"/><path d="M1774 1060L1776.500 1062 1780 1058.500" stroke="#fff" stroke-width="1.200" fill="none"/>
<rect x="1794" y="1053.500" width="14" height="14" rx="3.500" fill="#0aa5a8"/><rect x="1796.500" y="1056" width="9" height="9" rx="2" fill="#fff"/><text x="1798" y="1064" font-size="9.500" font-weight="bold" fill="#0a7f82">e</text>
<text x="1820" y="1064.500" font-size="11.700" fill="#fff" textLength="22">РУС</text>
<text x="1882" y="1055" font-size="12" fill="#fff" text-anchor="middle">14:26</text>
<text x="1882" y="1073" font-size="12" fill="#fff" text-anchor="middle" textLength="54">28.07.2017</text>
<path d="M1916.500 1042V1080" stroke="#3a5a78"/>
</svg>
</body></html>
